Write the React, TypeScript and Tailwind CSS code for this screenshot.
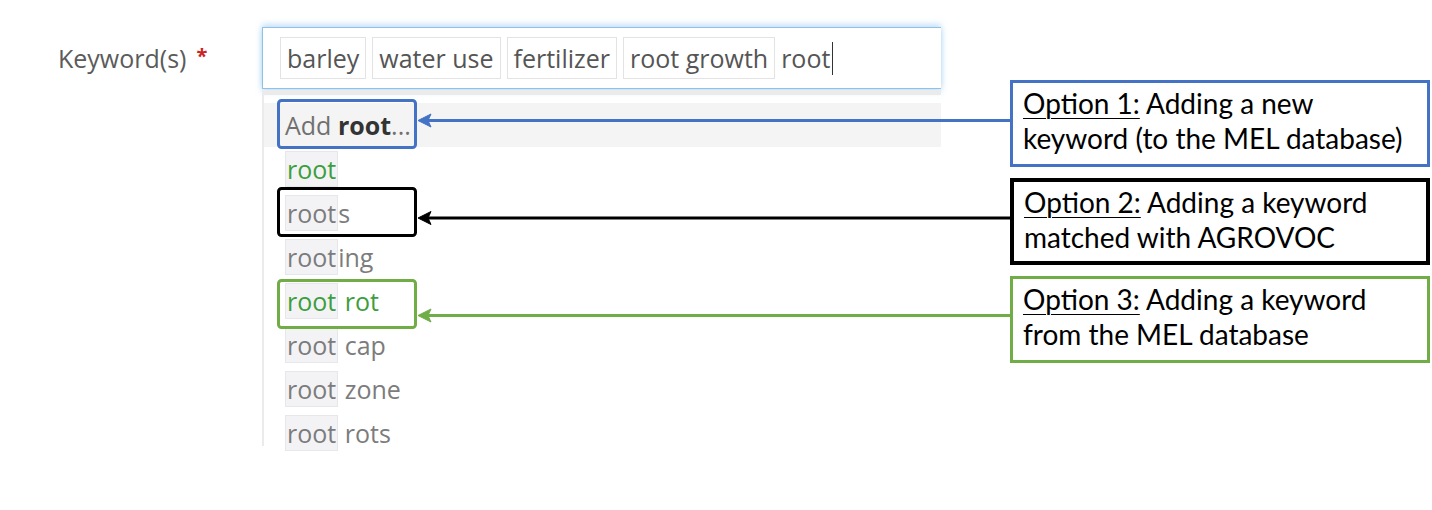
const tags = ["barley", "water use", "fertilizer", "root growth"];

const suggestions = [
    { match: "root", rest: "", green: true },
    { match: "root", rest: "s", green: false },
    { match: "root", rest: "ing", green: false },
    { match: "root", rest: " rot", green: true },
    { match: "root", rest: " cap", green: false },
    { match: "root", rest: " zone", green: false },
    { match: "root", rest: " rots", green: false },
];

function KeywordField() {
    return (
        <div className="flex w-[941px] shrink-0 font-['Open_Sans',sans-serif] text-[25px]">
            <div className="w-[262px] shrink-0 pl-[58px] pt-[36px]">
                <div className="flex items-start leading-[44px] text-[#5b5b5b]">
                    Keyword(s)
                    <span className="ml-[10px] text-[20px] font-bold leading-[40px] text-[#cc2222]">*</span>
                </div>
            </div>
            <div className="w-[679px] shrink-0 pt-[27px]">
                <div className="flex h-[62px] items-center gap-[6px] border border-r-0 border-[#8fc1e9] bg-white pl-[17px] shadow-[0_-3px_6px_rgba(102,175,233,0.35),0_3px_6px_rgba(102,175,233,0.35)]">
                    {tags.map((tag) => (
                        <span
                            key={tag}
                            className="h-[42px] border border-[#e3e3e3] px-[6px] leading-[40px] text-[#555]"
                        >
                            {tag}
                        </span>
                    ))}
                    <span className="flex items-center leading-[40px] text-[#555]">
                        root
                        <span className="ml-[2px] h-[33px] w-[1px] bg-[#333]" />
                    </span>
                </div>
                <div className="mt-[1px] h-[356px] border-t-[5px] border-l-2 border-[#ebebeb] pt-[8px]">
                    <div className="h-[44px] bg-[#f4f4f4] pl-[21px] leading-[44px] text-[#707070]">
                        Add <span className="font-bold text-[#333]">root</span>...
                    </div>
                    {suggestions.map((s, i) => (
                        <div
                            key={i}
                            className={`h-[44px] pl-[21px] leading-[44px] ${s.green ? "text-[#3d9e3d]" : "text-[#7c7c7c]"}`}
                        >
                            <span className="border border-[#e6e6ec] bg-[#f3f3f6] px-[1px]">{s.match}</span>
                            {s.rest}
                        </div>
                    ))}
                </div>
            </div>
        </div>
    );
}

function Callout({ label, lines, border }: { label: string; lines: [string, string]; border: string }) {
    return (
        <div className={`h-[87px] w-[420px] bg-white pl-[10px] pt-[3px] font-['Lato',sans-serif] text-[28px] leading-[35px] text-black ${border}`}>
            <span className="underline decoration-1 underline-offset-[4px]">{label}</span> {lines[0]}
            <br />
            {lines[1]}
        </div>
    );
}

function Annotations() {
    return (
        <svg className="pointer-events-none absolute left-0 top-0" width="1432" height="510" viewBox="0 0 1432 510">
            <rect x="278.5" y="100.5" width="137" height="47" rx="3" fill="none" stroke="#4472c4" strokeWidth="3" />
            <rect x="278.5" y="188.5" width="137" height="47" rx="3" fill="none" stroke="#000" strokeWidth="3" />
            <rect x="278.5" y="280.5" width="137" height="47" rx="3" fill="none" stroke="#70ad47" strokeWidth="3" />

            <line x1="1012" y1="120.5" x2="428" y2="120.5" stroke="#4472c4" strokeWidth="3" />
            <polygon points="418,120.5 431,114 428,120.5 431,127" fill="#4472c4" stroke="#4472c4" strokeWidth="1" />

            <line x1="1012" y1="218" x2="428" y2="218" stroke="#000" strokeWidth="3" />
            <polygon points="418,218 431,211.5 428,218 431,224.5" fill="#000" stroke="#000" strokeWidth="1" />

            <line x1="1012" y1="315.5" x2="428" y2="315.5" stroke="#70ad47" strokeWidth="3" />
            <polygon points="418,315.5 431,309 428,315.5 431,322" fill="#70ad47" stroke="#70ad47" strokeWidth="1" />
        </svg>
    );
}

export default function App() {
    return (
        <div className="relative flex h-[510px] w-[1432px] items-start overflow-hidden bg-white">
            <KeywordField />
            <div className="ml-[69px] flex flex-col gap-[11px] pt-[80px]">
                <Callout
                    label="Option 1:"
                    lines={["Adding a new", "keyword (to the MEL database)"]}
                    border="border-[3px] border-[#4472c4]"
                />
                <Callout
                    label="Option 2:"
                    lines={["Adding a keyword", "matched with AGROVOC"]}
                    border="border-[4px] border-black"
                />
                <Callout
                    label="Option 3:"
                    lines={["Adding a keyword", "from the MEL database"]}
                    border="border-[3px] border-[#70ad47]"
                />
            </div>
            <Annotations />
        </div>
    );
}
